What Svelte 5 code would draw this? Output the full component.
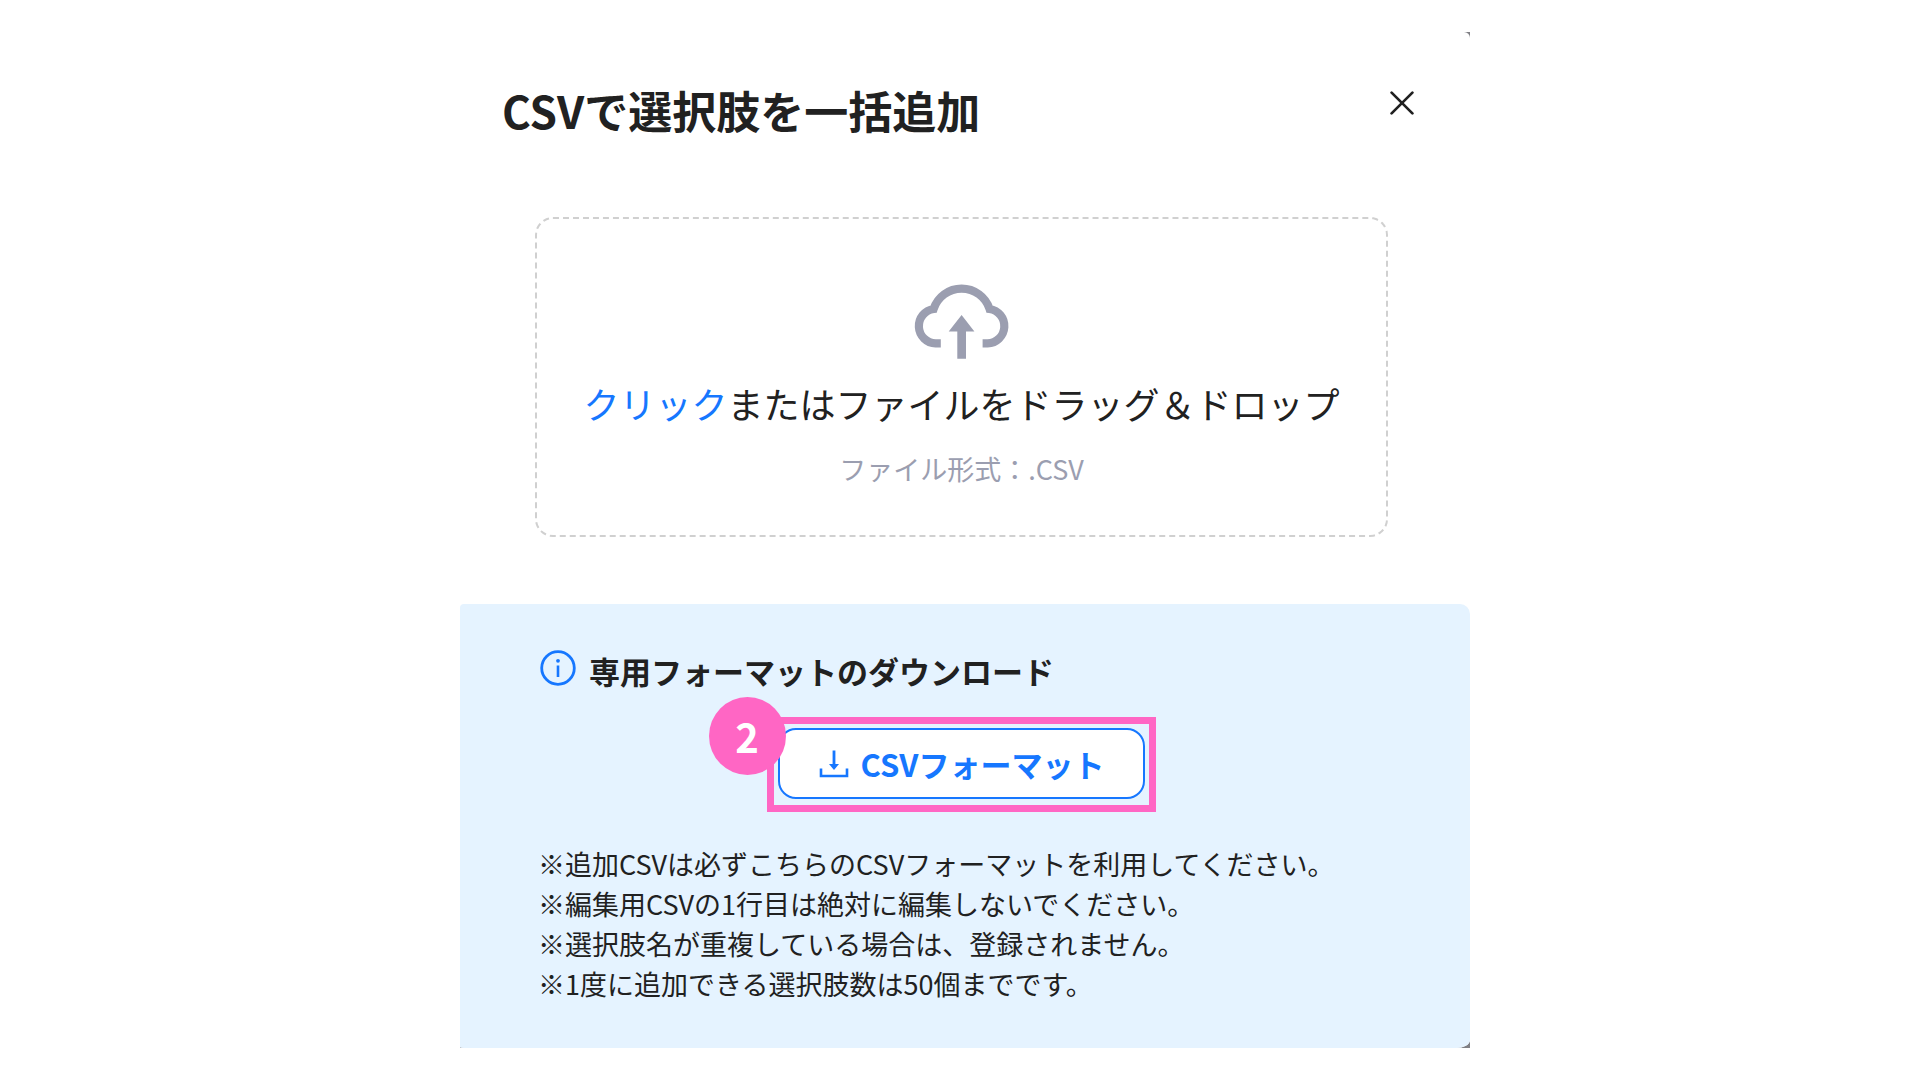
<script lang="ts">
	interface Props {
		/** Called with the dropped or picked CSV file */
		onselect?: (file: File) => void;
		/** Called when the dialog is dismissed */
		onclose?: () => void;
	}

	let { onselect, onclose }: Props = $props();

	const notes = [
		'※追加CSVは必ずこちらのCSVフォーマットを利用してください。',
		'※編集用CSVの1行目は絶対に編集しないでください。',
		'※選択肢名が重複している場合は、登録されません。',
		'※1度に追加できる選択肢数は50個までです。'
	];

	function pick(files: FileList | null | undefined) {
		if (files?.length) onselect?.(files[0]);
	}

	function handleDrop(event: DragEvent) {
		event.preventDefault();
		pick(event.dataTransfer?.files);
	}
</script>

<main class="page">
	<div class="backdrop">
		<section class="dialog" aria-labelledby="dialog-title">
			<header class="header">
				<h1 id="dialog-title">CSVで選択肢を一括追加</h1>
				<button type="button" class="close-btn" aria-label="閉じる" onclick={() => onclose?.()}>
					<svg width="24" height="24" viewBox="0 0 24 24" fill="none" stroke="currentColor" stroke-width="2.7" stroke-linecap="round">
						<path d="M1.6 1.6 22.4 22.4M22.4 1.6 1.6 22.4" />
					</svg>
				</button>
			</header>

			<label
				class="dropzone"
				for="csv-file"
				ondragover={(e) => e.preventDefault()}
				ondrop={handleDrop}
			>
				<input
					id="csv-file"
					class="file-input"
					type="file"
					accept=".csv"
					onchange={(e) => pick(e.currentTarget.files)}
				/>
				<svg class="cloud" width="96" height="76" viewBox="0 0 96 76" aria-hidden="true">
					<path
						d="M26.8 60.4H21.6A17.3 17.3 0 0 1 19.6 26A29.4 29.4 0 0 1 75.6 26A17.3 17.3 0 0 1 73.6 60.4H68.6"
						fill="none"
						stroke="currentColor"
						stroke-width="8.2"
					/>
					<path d="M47.6 32 60.4 48.6H52V75.7H43.3V48.6H34.7Z" fill="currentColor" />
				</svg>
				<span class="prompt"><span class="accent">クリック</span>またはファイルをドラッグ＆ドロップ</span>
				<span class="hint">ファイル形式：.CSV</span>
			</label>

			<section class="format">
				<h2>
					<svg class="info" width="36" height="36" viewBox="0 0 36 36" fill="none" aria-hidden="true">
						<circle cx="18" cy="18" r="16.3" stroke="currentColor" stroke-width="2.8" />
						<circle cx="18" cy="10.8" r="1.9" fill="currentColor" />
						<path d="M18 15.5V27" stroke="currentColor" stroke-width="2.6" />
					</svg>
					<span>専用フォーマットのダウンロード</span>
				</h2>

				<div class="highlight">
					<span class="step">2</span>
					<button type="button" class="download-btn">
						<svg width="30" height="28" viewBox="0 0 30 28" fill="none" aria-hidden="true">
							<path d="M15 .5V16" stroke="currentColor" stroke-width="2.8" />
							<path d="M10 14H20L15 20Z" fill="currentColor" />
							<path d="M2 18.5V26H28V18.5" stroke="currentColor" stroke-width="2.6" />
						</svg>
						CSVフォーマット
					</button>
				</div>

				<ul class="notes">
					{#each notes as note}
						<li>{note}</li>
					{/each}
				</ul>
			</section>
		</section>
	</div>
</main>

<style>
	:global(body) {
		background: #fff;
	}

	.page {
		display: flex;
		justify-content: center;
		padding: 32px 0 32px 10px;
		color: #212121;
		font-family: 'Noto Sans CJK JP', sans-serif;
	}

	.backdrop {
		width: 100%;
		max-width: 1010px;
		background: #808085;
	}

	.dialog {
		display: flex;
		flex-direction: column;
		border-radius: 0 6px 14px 8px / 0 6px 8px 1px;
		background: #fff;
		overflow: hidden;
	}

	.header {
		display: flex;
		align-items: flex-start;
		justify-content: space-between;
		padding: 46px 56px 0 42px;
	}

	h1 {
		margin: 0;
		font-size: 44px;
		font-weight: 700;
		line-height: 64px;
	}

	.close-btn {
		display: flex;
		margin: 13px 0 0;
		padding: 0;
		border: none;
		background: transparent;
		color: #212121;
		cursor: pointer;
	}

	.dropzone {
		display: flex;
		flex-direction: column;
		align-items: center;
		margin: 75px 82px 67px 75px;
		padding: 64px 0 44px;
		border: 2px dashed #d0d0d0;
		border-radius: 18px;
		cursor: pointer;
	}

	.file-input {
		position: absolute;
		width: 1px;
		height: 1px;
		opacity: 0;
	}

	.cloud {
		color: #9b9eb0;
	}

	.prompt {
		margin-top: 18px;
		font-size: 36px;
		line-height: 52px;
	}

	.accent {
		color: #1677ff;
	}

	.hint {
		margin-top: 18px;
		color: #9b9eb0;
		font-size: 27px;
		line-height: 44px;
	}

	.format {
		display: flex;
		flex-direction: column;
		padding: 46px 78px 44px;
		border-radius: 4px 10px 0 0;
		background: #e5f3ff;
	}

	h2 {
		display: flex;
		align-items: flex-start;
		gap: 13px;
		margin: 0;
		padding-left: 2px;
		font-size: 31px;
		font-weight: 700;
		line-height: 42px;
	}

	.info {
		color: #1677ff;
	}

	.highlight {
		position: relative;
		align-self: center;
		margin: 25px 7px 32px 0;
		padding: 4px 4px 6px;
		border: 7px solid #ff66c4;
	}

	.step {
		position: absolute;
		top: -27px;
		left: -65px;
		width: 77px;
		height: 78px;
		border-radius: 50%;
		background: #ff66c4;
		color: #fff;
		font-size: 40px;
		font-weight: 700;
		line-height: 78px;
		text-align: center;
	}

	.download-btn {
		display: flex;
		align-items: center;
		gap: 12px;
		padding: 11px 39px;
		border: 2px solid #1677ff;
		border-radius: 18px;
		background: #fff;
		color: #1677ff;
		font-family: inherit;
		font-size: 31px;
		font-weight: 700;
		line-height: 45px;
		cursor: pointer;
	}

	.notes {
		margin: 0;
		padding: 0;
		font-size: 27px;
		line-height: 40px;
		list-style: none;
	}
</style>
